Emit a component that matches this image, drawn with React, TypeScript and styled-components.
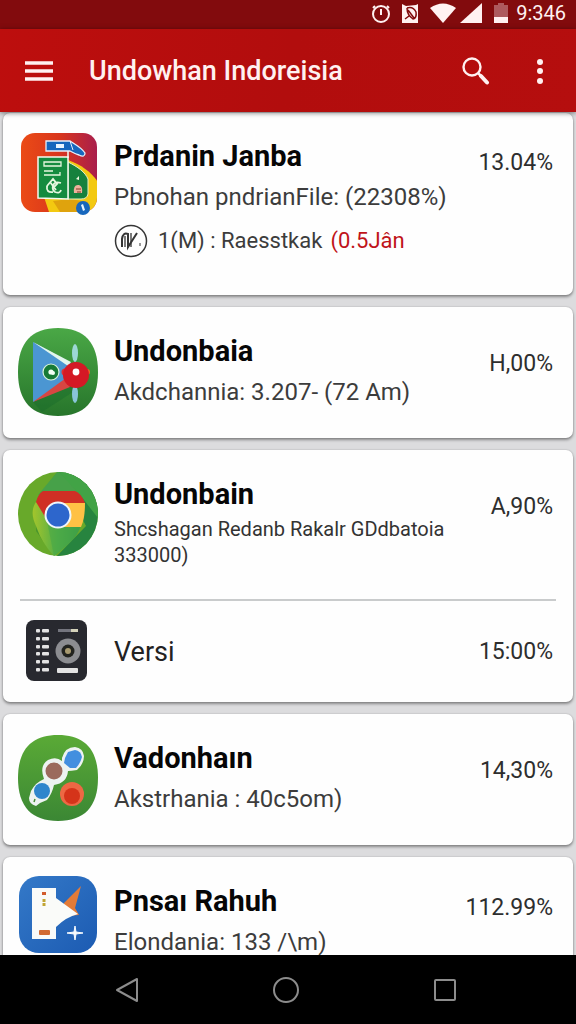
import React from 'react';
import styled, { createGlobalStyle } from 'styled-components';

const GlobalStyle = createGlobalStyle`
  * { box-sizing: border-box; }
  body {
    margin: 0;
    font-family: Roboto, 'Liberation Sans', sans-serif;
    background: #dcdcde;
  }
  h1, h2, p, ul { margin: 0; padding: 0; }
`;

const Screen = styled.div`
  display: flex;
  flex-direction: column;
  height: 100vh;
  overflow: hidden;
`;

const StatusBar = styled.div`
  display: flex;
  flex: none;
  align-items: center;
  justify-content: flex-end;
  height: 29px;
  padding: 0 10px 4px 0;
  background: #820b0d;
  color: #fff1f1;
`;

const StatusIcons = styled.svg`
  display: block;
  width: 140px;
  height: 24px;
  margin-right: 6px;
`;

const Clock = styled.time`
  font-size: 20px;
  line-height: 24px;
`;

const AppBar = styled.header`
  display: flex;
  flex: none;
  align-items: center;
  height: 83px;
  padding: 0 16px;
  background: linear-gradient(100deg, #bd0e0d, #b20d0d 50%, #b50e0e);
  color: #fff1f1;
  box-shadow: 0 1px 5px rgba(0, 0, 0, 0.5);
  z-index: 1;
`;

const IconButton = styled.button<{ $width?: number }>`
  display: grid;
  place-items: center;
  flex: none;
  width: ${(p) => p.$width ?? 48}px;
  height: 48px;
  padding: 0;
  border: 0;
  background: none;
  color: inherit;
  svg { display: block; }
`;

const PageTitle = styled.h1`
  flex: 1;
  padding-left: 28px;
  font-size: 27px;
  font-weight: 500;
  line-height: 40px;
  white-space: nowrap;
`;

const CardList = styled.main`
  display: flex;
  flex: 1;
  flex-direction: column;
  gap: 12px;
  min-height: 0;
  padding: 1px 3px 0;
  overflow: hidden;
`;

const Card = styled.article`
  flex: none;
  border-radius: 7px;
  background: #fefefe;
  box-shadow: 0 2px 3px rgba(0, 0, 0, 0.38), 0 0 2px rgba(0, 0, 0, 0.2);
`;

const Row = styled.div<{ $top?: number; $bottom?: number }>`
  display: flex;
  align-items: flex-start;
  gap: 16px;
  padding: ${(p) => p.$top ?? 21}px 20px ${(p) => p.$bottom ?? 22}px 15px;
`;

const AppIcon = styled.svg`
  display: block;
  flex: none;
  width: 80px;
  height: 88px;
  overflow: visible;
`;

const Body = styled.div`
  flex: 1;
  min-width: 0;
  padding-top: 3px;
`;

const Name = styled.h2`
  color: #060606;
  font-size: 29px;
  font-weight: 700;
  line-height: 40px;
  white-space: nowrap;
`;

const Detail = styled.p<{ $compact?: boolean }>`
  display: flex;
  align-items: center;
  color: #3c3c3c;
  font-size: ${(p) => (p.$compact ? 22 : 24)}px;
  line-height: 43px;
  white-space: nowrap;
`;

const SmallDetail = styled.p`
  padding-top: 2px;
  color: #333;
  font-size: 20px;
  line-height: 26px;
`;

const RoundMark = styled.svg`
  flex: none;
  width: 34px;
  height: 34px;
  margin-right: 10px;
`;

const Alert = styled.span`
  margin-left: 8px;
  color: #c0141a;
`;

const Percent = styled.span<{ $raised?: boolean }>`
  flex: none;
  padding-top: ${(p) => (p.$raised ? 10 : 16)}px;
  color: #2e2e2e;
  font-size: 23px;
  line-height: 40px;
`;

const Divider = styled.hr`
  height: 2px;
  margin: 0 17px;
  border: 0;
  background: #c9cbcc;
`;

const VersionRow = styled.div`
  display: flex;
  align-items: center;
  gap: 16px;
  height: 101px;
  padding: 0 20px 0 15px;
`;

const VersionLabel = styled.span`
  flex: 1;
  color: #222;
  font-size: 27px;
  line-height: 40px;
`;

const VersionPercent = styled(Percent)`
  padding-top: 0;
`;

const NavBar = styled.nav`
  display: flex;
  flex: none;
  align-items: center;
  justify-content: center;
  gap: 111px;
  height: 69px;
  padding-right: 4px;
  background: #000;
  color: #8c8c8c;
`;

const FileIcon = () => (
  <AppIcon viewBox="0 0 80 88" aria-hidden="true">
    <defs>
      <linearGradient id="file-bg" x1="0" x2="1">
        <stop offset="0" stopColor="#eb4b16" />
        <stop offset="0.5" stopColor="#d9361c" />
        <stop offset="1" stopColor="#a91e4c" />
      </linearGradient>
      <clipPath id="file-clip"><rect x="3" y="0" width="76" height="79" rx="14" /></clipPath>
    </defs>
    <g clipPath="url(#file-clip)">
      <rect x="3" width="76" height="79" fill="url(#file-bg)" />
      <path d="M26 64 L50 27 C64 32 74 40 80 49 V79 H31Z" fill="#f3c911" />
      <path d="M35 68 L52 66 L70 69 L64 79 H42Z" fill="#dfa30d" />
    </g>
    <path d="M50 29 C60 34 67 39 70 46 V61 Q69 66 63 66 H50Z" fill="#16813d" stroke="#e6f0c8" strokeWidth="1" />
    <path d="M20 24 H50 V66 L20 65Z" fill="#158b3f" stroke="#f4faef" strokeWidth="1.5" />
    <path d="M50 18 V25" stroke="#f4faef" strokeWidth="1.5" />
    <path d="M26 29 H43 V33 H26 Z M26 38 H35 M26 42 H42 L42 39" stroke="#e6f7df" strokeWidth="1.3" fill="none" />
    <path d="M29 53 L35 46 L39 51 L36 54 M29 53 Q28 60 35 59 M43 50 C34 47 33 56 37 59 Q42 61 43 57 M32 49 L38 57" fill="none" stroke="#e6f7df" strokeWidth="1.8" />
    <path d="M28 8 H52 C56 11 63 14 67 20 Q67 25 61 22 C57 21 54 19 52 18 H28Z" fill="#1767bd" stroke="#e7effa" strokeWidth="1.3" />
    <path d="M52 8 L55 17" stroke="#e7effa" />
    <rect x="38" y="11" width="8" height="4" fill="#e9f5ff" />
    <path d="M56 60 Q55 51 61 52 Q65 53 64 60Z" fill="#efb19c" />
    <path d="M58 56 H63 M59 59 H63" stroke="#803b27" />
    <path d="M58 46 L61 43 V47Z" fill="#eef6df" />
    <circle cx="65" cy="75" r="7" fill="#1767bd" />
    <path d="M63 72 L65 71 L67 77 L65 78Z" fill="#e9f5ff" />
  </AppIcon>
);

const PlayIcon = () => (
  <AppIcon viewBox="0 0 80 88" aria-hidden="true">
    <defs><linearGradient id="play-bg" x2="0" y2="1"><stop stopColor="#4aa846" /><stop offset="1" stopColor="#27752b" /></linearGradient></defs>
    <path d="M40 0 C66 0 80 14 80 44 S66 88 40 88 S0 74 0 44 S14 0 40 0Z" fill="url(#play-bg)" />
    <path d="M15 74 L59 51 L66 57 L24 84Z" fill="#17692b" opacity="0.4" />
    <path d="M15 14 L53 35 L46 57 L15 74Z" fill="#4b96d2" />
    <path d="M15 14 L53 34 L50 38Z" fill="#e2f6ed" />
    <path d="M15 74 L48 50 L52 59Z" fill="#d84642" />
    <ellipse cx="57" cy="25" rx="3" ry="9" fill="#9dd7d5" />
    <ellipse cx="57" cy="66" rx="3" ry="9" fill="#89c5d8" />
    <circle cx="33" cy="44" r="8" fill="#177a37" stroke="#d8f3de" strokeWidth="1.2" />
    <circle cx="33" cy="44" r="2.6" fill="#f2fff5" />
    <circle cx="35" cy="45" r="2" fill="#f2fff5" />
    <circle cx="69" cy="44" r="3" fill="#f06422" />
    <circle cx="47" cy="44" r="3.5" fill="#df3034" />
    <circle cx="58" cy="47" r="13" fill="#d41925" />
    <circle cx="58" cy="44" r="3.4" fill="#fff" />
  </AppIcon>
);

const BrowserIcon = () => (
  <AppIcon viewBox="0 0 80 88" aria-hidden="true">
    <defs>
      <clipPath id="browser-clip"><ellipse cx="40" cy="43" rx="40" ry="42" /></clipPath>
      <linearGradient id="browser-leaf" x2="1"><stop stopColor="#a3c52c" /><stop offset="0.5" stopColor="#55ae46" /><stop offset="1" stopColor="#2f9148" /></linearGradient>
    </defs>
    <g clipPath="url(#browser-clip)">
      <rect width="80" height="88" fill="#68a92a" />
      <path d="M40 0 L80 0 V88 H36 L68 55Z" fill="#27843f" />
      <path d="M40 0 L20 26 L18 60 L38 88 L22 66 L17 36Z" fill="#4b962c" />
      <path d="M40 0 L20 24 H66Z" fill="#47a149" />
      <path d="M40 0 L62 24 L80 47 V0Z" fill="#42a346" />
    </g>
    <path d="M18 31 C13 39 14 46 18 55 C22 66 27 75 36 85 C48 75 60 67 63 53 L43 38Z" fill="url(#browser-leaf)" />
    <path d="M25 20 H57 Q63 22 67 32 H39 L29 49 L18 31 Q20 23 25 20Z" fill="#d02f25" />
    <path d="M43 32 H67 C67 42 66 49 63 56 H42Z" fill="#ffc145" />
    <path d="M29 50 L40 56 H63 Q57 69 36 85Z" fill="#48a848" opacity="0.6" />
    <circle cx="40" cy="44" r="12.5" fill="#2d66cc" stroke="#eff6fb" strokeWidth="2" />
  </AppIcon>
);

const VersionIcon = () => (
  <AppIcon viewBox="0 0 80 88" aria-hidden="true">
    <rect x="8" y="12" width="61" height="61" rx="8" fill="#28292f" />
    <g fill="#e3e3e3">
      {[21, 29, 37, 44, 52, 60].map((y) => (
        <React.Fragment key={y}>
          <rect x="18" y={y} width="4" height="3.5" rx="1" />
          <rect x="24" y={y} width="7" height="3.5" rx="1" />
        </React.Fragment>
      ))}
      <rect x="39" y="60" width="21" height="5" rx="1" />
    </g>
    <path d="M40 22.5 H53" stroke="#74757e" strokeWidth="3" />
    <path d="M53 22.5 H60" stroke="#d4d2ba" strokeWidth="3" />
    <circle cx="50" cy="43" r="12.5" fill="#8c8d91" />
    <circle cx="50" cy="43" r="6.5" fill="#22231f" />
    <circle cx="50" cy="43" r="3" fill="#a89a70" />
  </AppIcon>
);

const LinkIcon = () => (
  <AppIcon viewBox="0 0 80 88" aria-hidden="true">
    <defs><linearGradient id="link-bg" x2="0" y2="1"><stop stopColor="#5aaa36" /><stop offset="1" stopColor="#3b8734" /></linearGradient></defs>
    <path d="M40 0 C66 0 80 14 80 43 S66 86 40 86 S0 72 0 43 S14 0 40 0Z" fill="url(#link-bg)" />
    <path d="M44 23 Q47 12 57 12 Q65 13 66 21 Q66 29 59 35 Q53 36 50 36 Q49 48 36 50 Q34 59 29 65 L22 68 L18 71 Q11 69 11 63 L13 56 Q18 47 26 44 Q21 31 30 25 Q38 21 44 26Z" fill="#edf3f1" />
    <path d="M50 17 L57 15 Q63 16 64 22 Q62 29 58 33 L52 33 L46 28 L47 23Z" fill="#438fdf" />
    <circle cx="36" cy="36" r="8.5" fill="#9b6a5c" />
    <circle cx="24" cy="56" r="8" fill="#2f86cc" />
    <path d="M16 67 L17 64" stroke="#458c35" strokeWidth="1.5" />
    <circle cx="54" cy="59" r="12" fill="#ed6844" />
    <circle cx="54" cy="61" r="8" fill="#d5341a" />
  </AppIcon>
);

const TicketIcon = () => (
  <AppIcon viewBox="0 0 80 88" aria-hidden="true">
    <defs><linearGradient id="ticket-bg" x2="1" y2="1"><stop stopColor="#3479c8" /><stop offset="1" stopColor="#1c5bb2" /></linearGradient></defs>
    <rect x="1" y="-2" width="78" height="77" rx="20" fill="url(#ticket-bg)" />
    <path d="M46 25 L63 8 L57 30 L61 37 L46 38Z" fill="#e37b38" />
    <path d="M14 10 H38 V20 L60 36 Q48 39 38 49 V61 H14Z" fill="#fafbf9" />
    <rect x="24" y="14" width="4" height="3" fill="#d25c2d" />
    <path d="M26 21 V29" stroke="#c1a534" strokeWidth="3" strokeDasharray="3 1" />
    <rect x="21" y="52" width="11" height="5" rx="1" fill="#d16a32" />
    <path d="M57 48 L58 54 L65 55 L58 56 L57 62 L56 56 L49 55 L56 54Z" fill="#f7fbff" stroke="#f7fbff" strokeLinejoin="round" />
  </AppIcon>
);

export default function App() {
  return (
    <>
      <GlobalStyle />
      <Screen>
        <StatusBar>
          <StatusIcons viewBox="0 0 140 24" aria-hidden="true">
            <g fill="none" stroke="currentColor" strokeWidth="2">
              <circle cx="11" cy="13" r="8" />
              <path d="M11 8 V14 M5 5 L3 7 M17 5 L19 7" />
            </g>
            <path d="M32 3 L36 5 L46 4 L48 3 V22 H32Z" fill="currentColor" />
            <path d="M37 7 Q43 5 46 11 Q47 17 43 18 Q37 14 37 7 M38 9 L44 17 M35 18 L39 15" fill="none" stroke="#820b0d" strokeWidth="1.5" />
            <path d="M60 7 Q73 -2 86 7 L73 22Z" fill="currentColor" />
            <path d="M90 22 L112 2 V22Z" fill="currentColor" />
            <path d="M124 4 H128 V2 H134 V4 H138 V22 H124Z" fill="#ad5a5e" />
            <rect x="124" y="16" width="14" height="6" fill="currentColor" />
          </StatusIcons>
          <Clock>9:346</Clock>
        </StatusBar>
        <AppBar>
          <IconButton type="button" aria-label="Menu" $width={45}>
            <svg width="28" height="20" viewBox="0 0 28 20">
              <path d="M0 2 H28 M0 10 H28 M0 18 H28" stroke="currentColor" strokeWidth="3.5" />
            </svg>
          </IconButton>
          <PageTitle>Undowhan Indoreisia</PageTitle>
          <IconButton type="button" aria-label="Search" $width={88}>
            <svg width="28" height="28" viewBox="0 0 28 28" fill="none" stroke="currentColor">
              <circle cx="10" cy="10" r="8.5" strokeWidth="2.4" />
              <path d="M16 16 L20 20" strokeWidth="2.5" />
              <path d="M19 19 L25 25.5" strokeWidth="4" strokeLinecap="round" />
            </svg>
          </IconButton>
          <IconButton type="button" aria-label="More" $width={40}>
            <svg width="8" height="26" viewBox="0 0 8 26" fill="currentColor">
              <circle cx="4" cy="4" r="3" />
              <circle cx="4" cy="13" r="3" />
              <circle cx="4" cy="23" r="3" />
            </svg>
          </IconButton>
        </AppBar>
        <CardList>
          <Card>
            <Row $top={20} $bottom={33}>
              <FileIcon />
              <Body>
                <Name>Prdanin Janba</Name>
                <Detail>Pbnohan pndrianFile: (22308%)</Detail>
                <Detail $compact>
                  <RoundMark viewBox="0 0 34 34" fill="none" stroke="#353535">
                    <circle cx="17" cy="17" r="15.5" strokeWidth="1.5" />
                    <path d="M8 23 V15 Q9 8 14 10 V23 L23 9" strokeWidth="2" />
                    <path d="M11 23 V12 M17 9 V23" strokeWidth="1.3" />
                    <path d="M26 19 V22" strokeWidth="1" />
                  </RoundMark>
                  <span>1(M) : Raesstkak</span>
                  <Alert>(0.5Jân</Alert>
                </Detail>
              </Body>
              <Percent $raised>13.04%</Percent>
            </Row>
          </Card>
          <Card>
            <Row>
              <PlayIcon />
              <Body>
                <Name>Undonbaia</Name>
                <Detail>Akdchannia: 3.207- (72 Am)</Detail>
              </Body>
              <Percent>H,00%</Percent>
            </Row>
          </Card>
          <Card>
            <Row $bottom={31}>
              <BrowserIcon />
              <Body>
                <Name>Undonbain</Name>
                <SmallDetail>Shcshagan Redanb Rakalr GDdbatoia 333000)</SmallDetail>
              </Body>
              <Percent>A,90%</Percent>
            </Row>
            <Divider />
            <VersionRow>
              <VersionIcon />
              <VersionLabel>Versi</VersionLabel>
              <VersionPercent>15:00%</VersionPercent>
            </VersionRow>
          </Card>
          <Card>
            <Row>
              <LinkIcon />
              <Body>
                <Name>Vadonhaın</Name>
                <Detail>Akstrhania : 40c5om)</Detail>
              </Body>
              <Percent>14,30%</Percent>
            </Row>
          </Card>
          <Card>
            <Row>
              <TicketIcon />
              <Body>
                <Name>Pnsaı Rahuh</Name>
                <Detail>Elondania: 133 /\m)</Detail>
              </Body>
              <Percent $raised>112.99%</Percent>
            </Row>
          </Card>
        </CardList>
        <NavBar>
          <IconButton type="button" aria-label="Back">
            <svg width="24" height="26" viewBox="0 0 24 26" fill="none" stroke="currentColor" strokeWidth="2" strokeLinejoin="round">
              <path d="M22 2 V24 L2 13Z" />
            </svg>
          </IconButton>
          <IconButton type="button" aria-label="Home">
            <svg width="26" height="26" viewBox="0 0 26 26" fill="none" stroke="currentColor" strokeWidth="2">
              <circle cx="13" cy="13" r="12" />
            </svg>
          </IconButton>
          <IconButton type="button" aria-label="Recent apps">
            <svg width="22" height="22" viewBox="0 0 22 22" fill="none" stroke="currentColor" strokeWidth="2">
              <rect x="1" y="1" width="20" height="20" rx="1" />
            </svg>
          </IconButton>
        </NavBar>
      </Screen>
    </>
  );
}
